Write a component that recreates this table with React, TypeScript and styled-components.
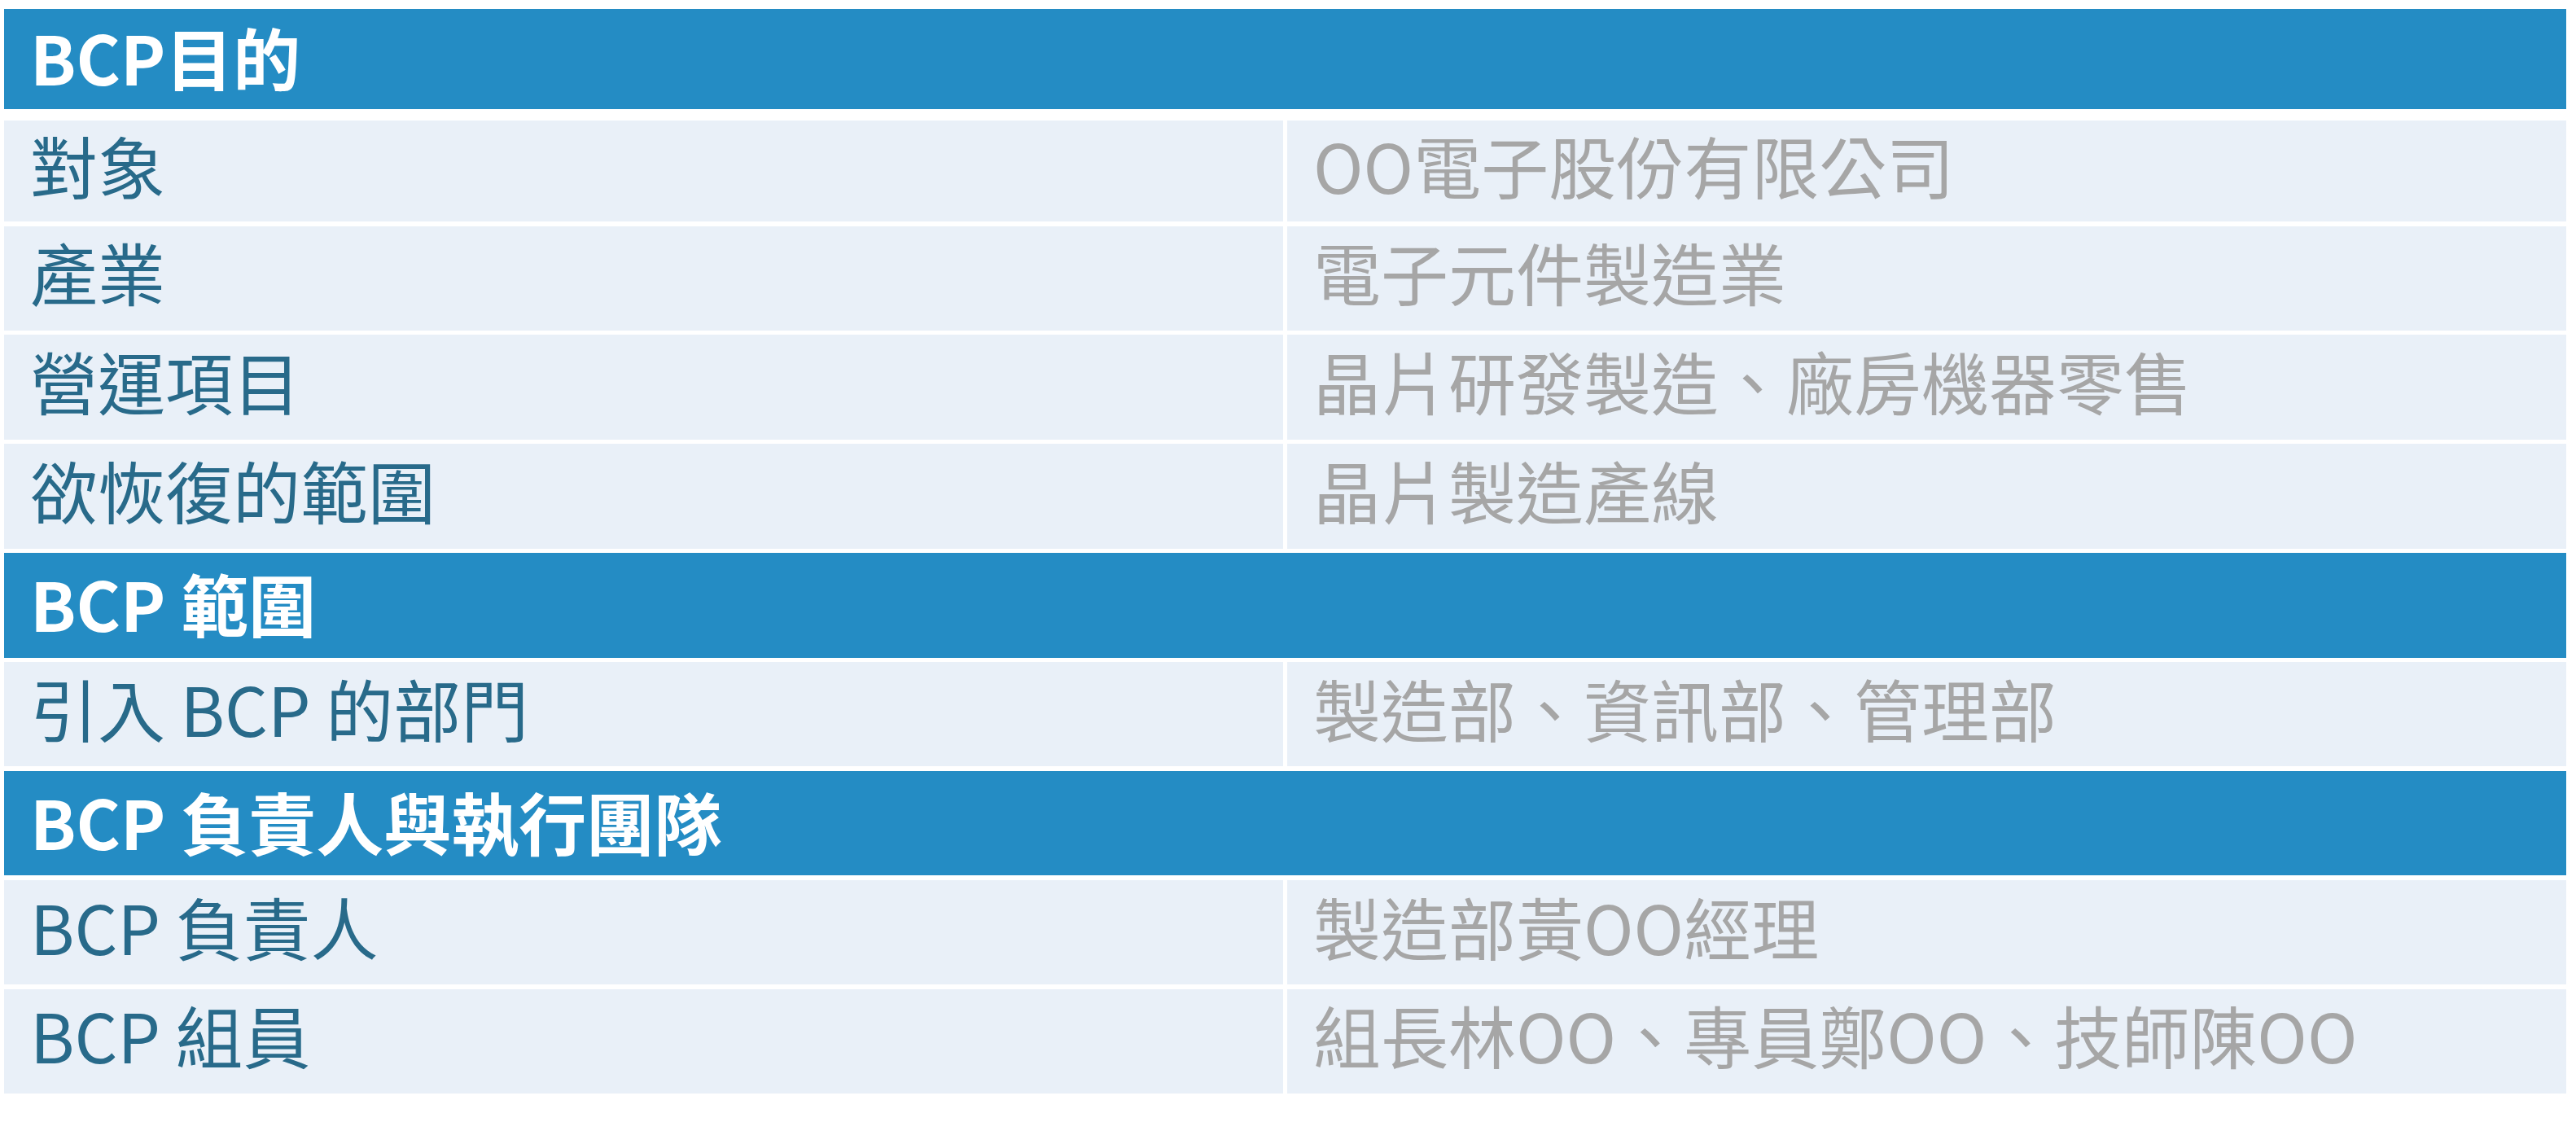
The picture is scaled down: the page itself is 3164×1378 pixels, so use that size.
import React from 'react'
import styled, { createGlobalStyle } from 'styled-components'

const GlobalStyle = createGlobalStyle`
  html, body {
    margin: 0;
    padding: 0;
    background: #ffffff;
  }
  body {
    font-family: "Noto Sans CJK TC", "Noto Sans CJK SC", sans-serif;
  }
`

type Row = { label: string; value: string }
type Section = { title: string; rows: Row[] }

const sections: Section[] = [
  {
    title: 'BCP目的',
    rows: [
      { label: '對象', value: 'OO電子股份有限公司' },
      { label: '產業', value: '電子元件製造業' },
      { label: '營運項目', value: '晶片研發製造、廠房機器零售' },
      { label: '欲恢復的範圍', value: '晶片製造產線' },
    ],
  },
  {
    title: 'BCP 範圍',
    rows: [{ label: '引入 BCP 的部門', value: '製造部、資訊部、管理部' }],
  },
  {
    title: 'BCP 負責人與執行團隊',
    rows: [
      { label: 'BCP 負責人', value: '製造部黃OO經理' },
      { label: 'BCP 組員', value: '組長林OO、專員鄭OO、技師陳OO' },
    ],
  },
]

export default function App() {
  return (
    <>
      <GlobalStyle />
      <Page>
        <Table>
          {sections.map((s, i) => (
            <React.Fragment key={s.title}>
              <Header $first={i === 0}>{s.title}</Header>
              {s.rows.map((r, j) => (
                <TableRow key={r.label} $first={i === 0 && j === 0}>
                  <Label>{r.label}</Label>
                  <Value>{r.value}</Value>
                </TableRow>
              ))}
            </React.Fragment>
          ))}
        </Table>
      </Page>
    </>
  )
}

const Page = styled.div`
  width: 3164px;
  height: 1378px;
  padding: 11px 12px 0 5px;
  box-sizing: border-box;
`

const Table = styled.div`
  display: flex;
  flex-direction: column;
  gap: 5.5px;
`

const Header = styled.div<{ $first?: boolean }>`
  flex: none;
  height: ${(p) => (p.$first ? '123px' : '128.4px')};
  margin-bottom: ${(p) => (p.$first ? '8.5px' : '0')};
  background: #248cc4;
  color: #ffffff;
  font-weight: 700;
  font-size: 83px;
  display: flex;
  align-items: center;
  padding: 0 0 6px 32px;
  box-sizing: border-box;
  line-height: 1;
`

const TableRow = styled.div<{ $first?: boolean }>`
  flex: none;
  display: grid;
  grid-template-columns: 1fr 1fr;
  gap: 5px;
  height: ${(p) => (p.$first ? '124px' : '128.4px')};
`

const Cell = styled.div`
  background: #e9f0f8;
  display: flex;
  align-items: center;
  font-size: 83px;
  line-height: 1;
  padding: 0 0 16px 32px;
  box-sizing: border-box;
  white-space: nowrap;
`

const Label = styled(Cell)`
  color: #286a8a;
`

const Value = styled(Cell)`
  color: #a6a6a6;
`
